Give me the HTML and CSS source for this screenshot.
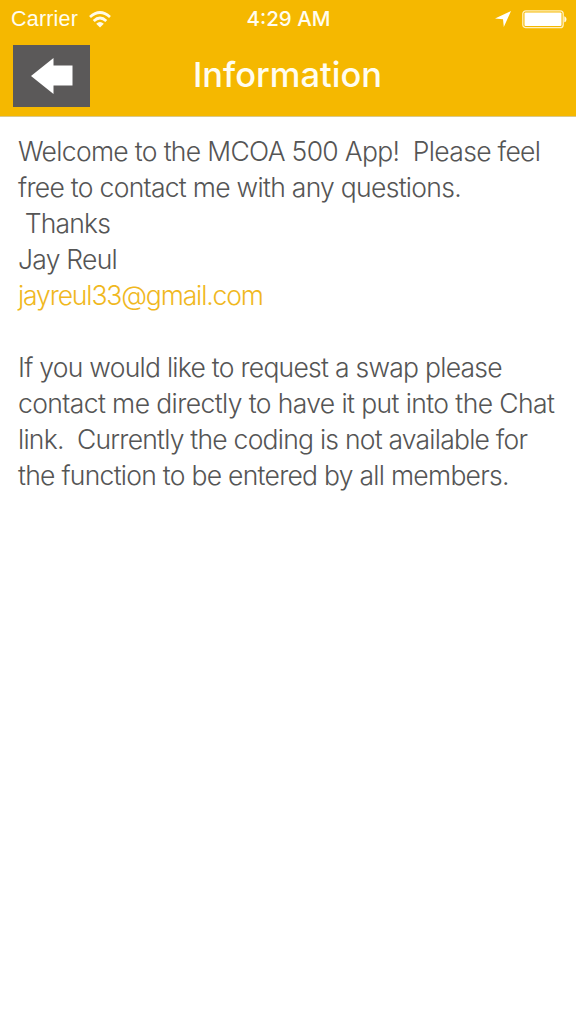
FILE: index.html
```html
<!DOCTYPE html>
<html lang="en">
<head>
<meta charset="utf-8">
<title>Information</title>
<link rel="stylesheet" href="styles.css">
</head>
<body>
<header class="header">
  <div class="status">
    <div class="status-left">
      <span class="carrier">Carrier</span>
      <svg class="wifi" width="22" height="17" viewBox="0 0 22 17" fill="none" stroke="#fffbe8" stroke-width="2.7"><path d="M1 6.1Q11-3.1 21 6.1M4.7 10Q11 4 17.3 10"/><path d="M7.2 12.7Q11 9.2 14.8 12.7L11 16.4Z" fill="#fffbe8" stroke="none"/></svg>
    </div>
    <span class="time">4:29 AM</span>
    <div class="status-right">
      <svg class="location" width="17" height="17" viewBox="0 0 17 17"><path d="M16 0L8.8 16 8 8.3 0 7.5Z" fill="#fff"/></svg>
      <svg class="battery" width="46" height="19" viewBox="0 0 46 19"><rect x=".8" y=".8" width="40.4" height="16.9" rx="3" fill="none" stroke="#fff0bd" stroke-width="1.3"/><rect x="2.5" y="2.5" width="37" height="13.5" rx="1" fill="#fff"/><path d="M42.3 6.2C45.2 7 45.2 11.5 42.3 12.3Z" fill="#fff9df"/></svg>
    </div>
  </div>
  <div class="navbar">
    <button class="back" aria-label="Back"><svg width="42" height="36" viewBox="0 0 42 36"><path d="M0 18L22.5 0V7.5H41.5V27.5H22.5V36Z" fill="#fff"/></svg></button>
    <h1 class="title">Information</h1>
  </div>
</header>
<main class="content">
  <p class="line l1">Welcome to the MCOA 500 App!&nbsp; Please feel</p>
  <p class="line l2">free to contact me with any questions.</p>
  <p class="line l3">&nbsp;Thanks</p>
  <p class="line l4">Jay Reul</p>
  <p class="line l5"><a class="email" href="mailto:jayreul33@gmail.com">jayreul33@gmail.com</a></p>
  <p class="line gap l6">If you would like to request a swap please</p>
  <p class="line l7">contact me directly to have it put into the Chat</p>
  <p class="line l8">link.&nbsp; Currently the coding is not available for</p>
  <p class="line l9">the function to be entered by all members.</p>
</main>
</body>
</html>
```
FILE: styles.css
```css
* { box-sizing: border-box; }
body { margin: 0; background: #fff; font-family: Inter, "Liberation Sans", sans-serif; }
.header { height: 117px; background: #f5b800; border-bottom: 1px solid #d9c88c; color: #fffdf0; }
.status { display: grid; grid-template-columns: 1fr auto 1fr; height: 38px; align-items: center; padding: 0 10px 0 11px; font-family: "Liberation Sans", sans-serif; font-size: 21.5px; }
.status-left { display: flex; align-items: center; gap: 11px; }
.carrier { letter-spacing: .2px; }
.time { font-family: Inter, sans-serif; font-weight: 500; font-size: 20.5px; line-height: 24px; }
.status-right { display: flex; justify-content: flex-end; align-items: center; gap: 10px; margin-right: -2px; }
.navbar { display: grid; grid-template-columns: 77px 1fr 77px; height: 78px; padding: 7px 14px 0 13px; }
.back { width: 77px; height: 62px; padding: 0; border: 0; background: #5b5959; display: flex; align-items: center; justify-content: center; }
.title { margin: 0; text-align: center; font-size: 34.5px; font-weight: 500; line-height: 60px; }
.content { padding: 16px 18px; color: #555; font-size: 26.5px; font-weight: 300; }
.line { margin: 0; line-height: 36px; white-space: nowrap; width: max-content; }
.l1 { letter-spacing: -.68px; }
.l2 { letter-spacing: -.71px; }
.l3 { letter-spacing: -.8px; }
.l4 { letter-spacing: -.75px; }
.l5 { letter-spacing: -1.13px; }
.l6 { letter-spacing: -.74px; }
.l7 { letter-spacing: -.6px; }
.l8 { letter-spacing: -.77px; }
.l9 { letter-spacing: -.73px; }
.gap { margin-top: 36px; }
.email { color: #f0b81e; text-decoration: none; }
```
